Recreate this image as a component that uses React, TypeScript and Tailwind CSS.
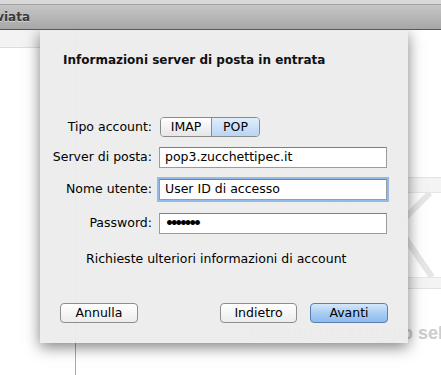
import React from 'react';

const fieldBase =
  'h-[21px] w-[228px] bg-white border border-[#9c9c9c] border-t-[#7f7f7f] px-[5px] flex items-center text-[12.5px] text-black';

const MailSetupSheet: React.FC = () => {
  return (
    <div className="relative w-[441px] h-[375px] overflow-hidden bg-white font-['DejaVu_Sans',sans-serif]">
      {/* Toolbar */}
      <div className="relative z-10 h-[30px] flex flex-col">
        <div className="h-[5px] bg-[#d9d9d9] border-b border-[#a3a3a3]" />
        <div className="h-[25px] bg-gradient-to-b from-[#c6c6c6] to-[#a7a7a7] border-b border-[#585858] flex items-center">
          <div className="w-[30px] overflow-hidden flex justify-end">
            <span className="whitespace-nowrap text-[12px] font-bold text-[#3b3b3b] [text-shadow:0_1px_0_rgba(255,255,255,0.45)]">
              Posta inviata
            </span>
          </div>
        </div>
      </div>

      {/* Window body */}
      <div className="flex h-[345px]">
        <div className="w-[76px] shrink-0 border-r border-[#a9a9a9]">
          <div className="h-[18px] bg-[#f3f3f3] border-b border-[#dcdcdc]" />
        </div>
        <div className="flex-1 overflow-hidden flex flex-col pt-[147px]">
          <svg width="150" height="112" viewBox="0 0 150 112" className="ml-[258px] shrink-0">
            <rect x="0.5" y="0.5" width="149" height="111" fill="#f4f4f4" stroke="#e2e2e2" />
            <rect x="14.5" y="15.5" width="121" height="85" fill="#ffffff" stroke="#e6e6e6" />
            <path d="M96 16 L66 46" stroke="#e6e6e6" strokeWidth="6" />
            <path d="M70 59 L98 100" stroke="#e6e6e6" strokeWidth="6" />
          </svg>
          <div className="ml-[173px] mt-[34px] whitespace-nowrap font-['Liberation_Sans',sans-serif] font-bold text-[18px] leading-[20px] text-[#cdcdcd]">
            Nessun messaggio selezionato
          </div>
        </div>
      </div>

      {/* Sheet */}
      <div className="absolute left-[40px] top-[30px] w-[368px] h-[313px] bg-[#ececec]/95 shadow-[0_4px_14px_rgba(0,0,0,0.5)] flex flex-col text-[12.5px] text-black">
        <div className="pt-[22px] pl-[23px] font-bold text-[12px] leading-[16px] text-[#111]">
          Informazioni server di posta in entrata
        </div>

        <div className="mt-[49px] flex items-center h-[20px]">
          <div className="w-[112px] text-right">Tipo account:</div>
          <div className="ml-[8px] flex h-[20px] rounded-[4px] border border-[#8a8a8a] overflow-hidden">
            <div className="w-[51px] flex items-center justify-center bg-gradient-to-b from-white to-[#e6e6e6] border-r border-[#8a8a8a]">
              IMAP
            </div>
            <div className="w-[47px] flex items-center justify-center bg-gradient-to-b from-[#e0edfb] to-[#b9d5f3]">
              POP
            </div>
          </div>
        </div>

        <div className="mt-[10px] flex items-center">
          <div className="w-[112px] text-right">Server di posta:</div>
          <div className={`ml-[7px] ${fieldBase}`}>pop3.zucchettipec.it</div>
        </div>

        <div className="mt-[11px] flex items-center">
          <div className="w-[112px] text-right">Nome utente:</div>
          <div className={`ml-[7px] ${fieldBase} h-[20px] border-[#6b9ad3] shadow-[0_0_0_2px_#93b9e8]`}>
            User ID di accesso
          </div>
        </div>

        <div className="mt-[13px] flex items-center">
          <div className="w-[112px] text-right">Password:</div>
          <div className={`ml-[7px] ${fieldBase} h-[20px]`}>
            <span className="text-[14px] font-bold tracking-[-4.3px]">•••••••</span>
          </div>
        </div>

        <div className="mt-[17px] pl-[46px] leading-[16px]">Richieste ulteriori informazioni di account</div>

        <div className="mt-auto pb-[20px] px-[20px] flex justify-between">
          <button className="w-[78px] h-[20px] rounded-[4px] border border-[#8e8e8e] bg-gradient-to-b from-white to-[#ececec] text-[12.5px] leading-none">
            Annulla
          </button>
          <div className="flex gap-[13px]">
            <button className="w-[77px] h-[20px] rounded-[4px] border border-[#8e8e8e] bg-gradient-to-b from-white to-[#ececec] text-[12.5px] leading-none">
              Indietro
            </button>
            <button className="w-[78px] h-[20px] rounded-[4px] border border-[#5b7fae] bg-gradient-to-b from-[#d6e7fb] via-[#a9cdf3] to-[#8cbcef] text-[12.5px] leading-none">
              Avanti
            </button>
          </div>
        </div>
      </div>
    </div>
  );
};

export default MailSetupSheet;
